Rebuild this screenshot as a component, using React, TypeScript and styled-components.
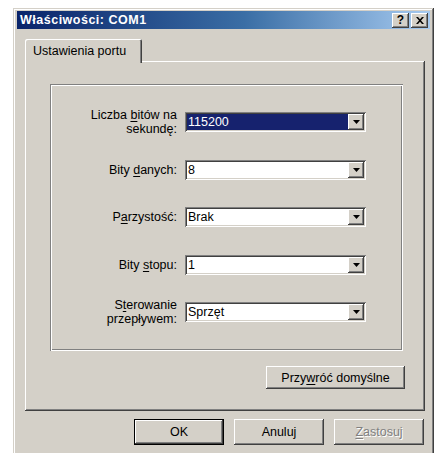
import React from "react";
import styled, { createGlobalStyle, css } from "styled-components";

const GlobalStyle = createGlobalStyle`
  html, body {
    margin: 0;
    padding: 0;
    background: #ffffff;
    overflow: hidden;
  }
  body {
    font-family: "Liberation Sans", Arial, sans-serif;
    font-size: 12.5px;
    color: #000;
  }
`;

const face = "#d4d0c8";

const raised = css`
  box-shadow: inset -1px -1px #404040, inset 1px 1px #ffffff,
    inset -2px -2px #808080, inset 2px 2px ${face};
`;

const Page = styled.div`
  padding: 8px 0 0 13px;
  height: 453px;
  box-sizing: border-box;
`;

const Window = styled.div`
  width: 421px;
  height: 460px;
  box-sizing: border-box;
  background: ${face};
  padding: 3px 4px 4px 4px;
  box-shadow: inset -1px -1px #404040, inset 1px 1px ${face},
    inset -2px -2px #808080, inset 2px 2px #ffffff;
  display: flex;
  flex-direction: column;
`;

const TitleBar = styled.div`
  height: 18px;
  display: flex;
  align-items: center;
  padding: 0 2px 0 3px;
  background: linear-gradient(90deg, #0a246a 0%, #3a6ea5 55%, #a6caf0 100%);
`;

const Title = styled.span`
  flex: 1;
  color: #ffffff;
  font-weight: bold;
  font-size: 12.5px;
  letter-spacing: 0.5px;
`;

const CaptionButton = styled.div<{ $gap?: number }>`
  width: 17px;
  height: 15px;
  box-sizing: border-box;
  background: ${face};
  ${raised};
  margin-left: ${(p) => p.$gap ?? 0}px;
  display: flex;
  align-items: center;
  justify-content: center;
  font-weight: bold;
  font-size: 12px;
  line-height: 1;
`;

const Body = styled.div`
  padding: 10px 5px 0 8px;
  display: flex;
  flex-direction: column;
`;

const TabStrip = styled.div`
  display: flex;
  height: 22px;
  position: relative;
  z-index: 1;
`;

const Tab = styled.div`
  width: 117px;
  height: 24px;
  box-sizing: border-box;
  background: ${face};
  border-radius: 2px 2px 0 0;
  box-shadow: inset 1px 1px #ffffff, inset -1px 0 #404040, inset -2px 0 #808080;
  display: flex;
  align-items: flex-start;
  padding: 5px 0 0 8px;
`;

const Panel = styled.div`
  height: 350px;
  box-sizing: border-box;
  background: ${face};
  ${raised};
  padding: 23px 22px 0 25px;
  display: flex;
  flex-direction: column;
`;

const Group = styled.div`
  height: 267px;
  box-sizing: border-box;
  box-shadow: inset 1px 1px #808080, inset -1px -1px #ffffff,
    inset 2px 2px #ffffff, inset -2px -2px #808080;
  padding: 28px 0 0 0;
`;

const Form = styled.div`
  display: grid;
  grid-template-columns: 127px 181px;
  grid-auto-rows: 20px;
  column-gap: 8px;
  row-gap: 27.5px;
`;

const Label = styled.div`
  height: 20px;
  display: flex;
  align-items: center;
  justify-content: flex-end;
  text-align: right;
  line-height: 14px;
`;

const Key = styled.span`
  text-decoration: underline;
  text-underline-offset: 2px;
`;

const Combo = styled.div`
  height: 20px;
  box-sizing: border-box;
  background: #ffffff;
  box-shadow: inset 1px 1px #808080, inset -1px -1px #ffffff,
    inset 2px 2px #404040, inset -2px -2px ${face};
  padding: 2px;
  display: flex;
`;

const ComboValue = styled.div<{ $selected?: boolean }>`
  flex: 1;
  display: flex;
  align-items: center;
  padding-left: 1px;
  background: ${(p) => (p.$selected ? "#16226e" : "#ffffff")};
  color: ${(p) => (p.$selected ? "#ffffff" : "#000000")};
`;

const DropButton = styled.div`
  width: 16px;
  box-sizing: border-box;
  background: ${face};
  ${raised};
  display: flex;
  align-items: center;
  justify-content: center;
`;

const PanelFooter = styled.div`
  display: flex;
  justify-content: flex-end;
  margin-top: 15px;
  margin-right: -2px;
`;

const Button = styled.button<{ $w: number; $h: number; $default?: boolean }>`
  width: ${(p) => p.$w}px;
  height: ${(p) => p.$h}px;
  box-sizing: border-box;
  border: none;
  padding: 0;
  margin: 0;
  font: inherit;
  color: #000;
  background: ${face};
  ${(p) =>
    p.$default
      ? css`
          box-shadow: inset 0 0 0 1px #000000, inset -2px -2px #404040,
            inset 2px 2px #ffffff, inset -3px -3px #808080;
        `
      : raised};
  &:disabled {
    color: #808080;
    text-shadow: 1px 1px #ffffff;
  }
`;

const Footer = styled.div`
  display: flex;
  justify-content: flex-end;
  gap: 10px;
  margin-top: 8px;
  padding-right: 1px;
`;

const Arrow = () => (
  <svg width="7" height="4" viewBox="0 0 7 4">
    <path d="M0 0h7L3.5 4z" fill="#000" />
  </svg>
);

const CloseGlyph = () => (
  <svg width="8" height="7" viewBox="0 0 8 7">
    <path
      d="M0 0h2l2 2.2L6 0h2L5 3.5 8 7H6L4 4.8 2 7H0l3-3.5z"
      fill="#000"
    />
  </svg>
);

type Field = {
  label: React.ReactNode;
  value: string;
  selected?: boolean;
};

const fields: Field[] = [
  {
    label: (
      <>
        Liczba <Key>b</Key>itów na
        <br />
        sekundę:
      </>
    ),
    value: "115200",
    selected: true,
  },
  {
    label: (
      <>
        Bity <Key>d</Key>anych:
      </>
    ),
    value: "8",
  },
  {
    label: (
      <>
        P<Key>a</Key>rzystość:
      </>
    ),
    value: "Brak",
  },
  {
    label: (
      <>
        Bity <Key>s</Key>topu:
      </>
    ),
    value: "1",
  },
  {
    label: (
      <>
        S<Key>t</Key>erowanie
        <br />
        przepływem:
      </>
    ),
    value: "Sprzęt",
  },
];

export default function App() {
  return (
    <>
      <GlobalStyle />
      <Page>
        <Window>
          <TitleBar>
            <Title>Właściwości: COM1</Title>
            <CaptionButton>?</CaptionButton>
            <CaptionButton $gap={2}>
              <CloseGlyph />
            </CaptionButton>
          </TitleBar>
          <Body>
            <TabStrip>
              <Tab>Ustawienia portu</Tab>
            </TabStrip>
            <Panel>
              <Group>
                <Form>
                  {fields.map((f, i) => (
                    <React.Fragment key={i}>
                      <Label>
                        <span>{f.label}</span>
                      </Label>
                      <Combo>
                        <ComboValue $selected={f.selected}>{f.value}</ComboValue>
                        <DropButton>
                          <Arrow />
                        </DropButton>
                      </Combo>
                    </React.Fragment>
                  ))}
                </Form>
              </Group>
              <PanelFooter>
                <Button $w={139} $h={23}>
                  Przy<Key>w</Key>róć domyślne
                </Button>
              </PanelFooter>
            </Panel>
            <Footer>
              <Button $w={90} $h={26} $default>
                OK
              </Button>
              <Button $w={90} $h={26}>
                Anuluj
              </Button>
              <Button $w={90} $h={26} disabled>
                <Key>Z</Key>astosuj
              </Button>
            </Footer>
          </Body>
        </Window>
      </Page>
    </>
  );
}
